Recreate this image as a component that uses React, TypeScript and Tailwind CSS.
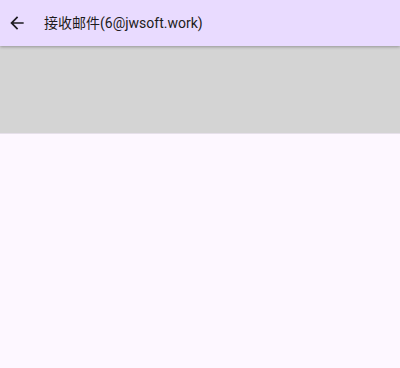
function BackArrow() {
  return (
    <svg width="20" height="20" viewBox="0 0 24 24" fill="currentColor" aria-hidden="true">
      <path d="M20 11H7.83l5.59-5.59L12 4l-8 8 8 8 1.41-1.41L7.83 13H20v-2z" />
    </svg>
  );
}

export default function App() {
  return (
    <div className="flex h-[368px] w-[400px] flex-col bg-[#fdf7ff] font-['Roboto','Noto_Sans_CJK_SC',sans-serif]">
      <header className="relative z-10 flex h-[46px] shrink-0 items-center bg-[#e9dbff] shadow-[0_1px_3px_rgba(0,0,0,0.3)]">
        <button type="button" className="ml-[7px] flex text-[#1d1b20]">
          <BackArrow />
        </button>
        <h1 className="ml-[17px] text-[14px] text-[#1d1b20]">接收邮件(6@jwsoft.work)</h1>
      </header>
      <div className="h-[88px] shrink-0 border-b border-[#e6e0ea] bg-[#d4d4d4]" />
      <main className="flex-1" />
    </div>
  );
}
